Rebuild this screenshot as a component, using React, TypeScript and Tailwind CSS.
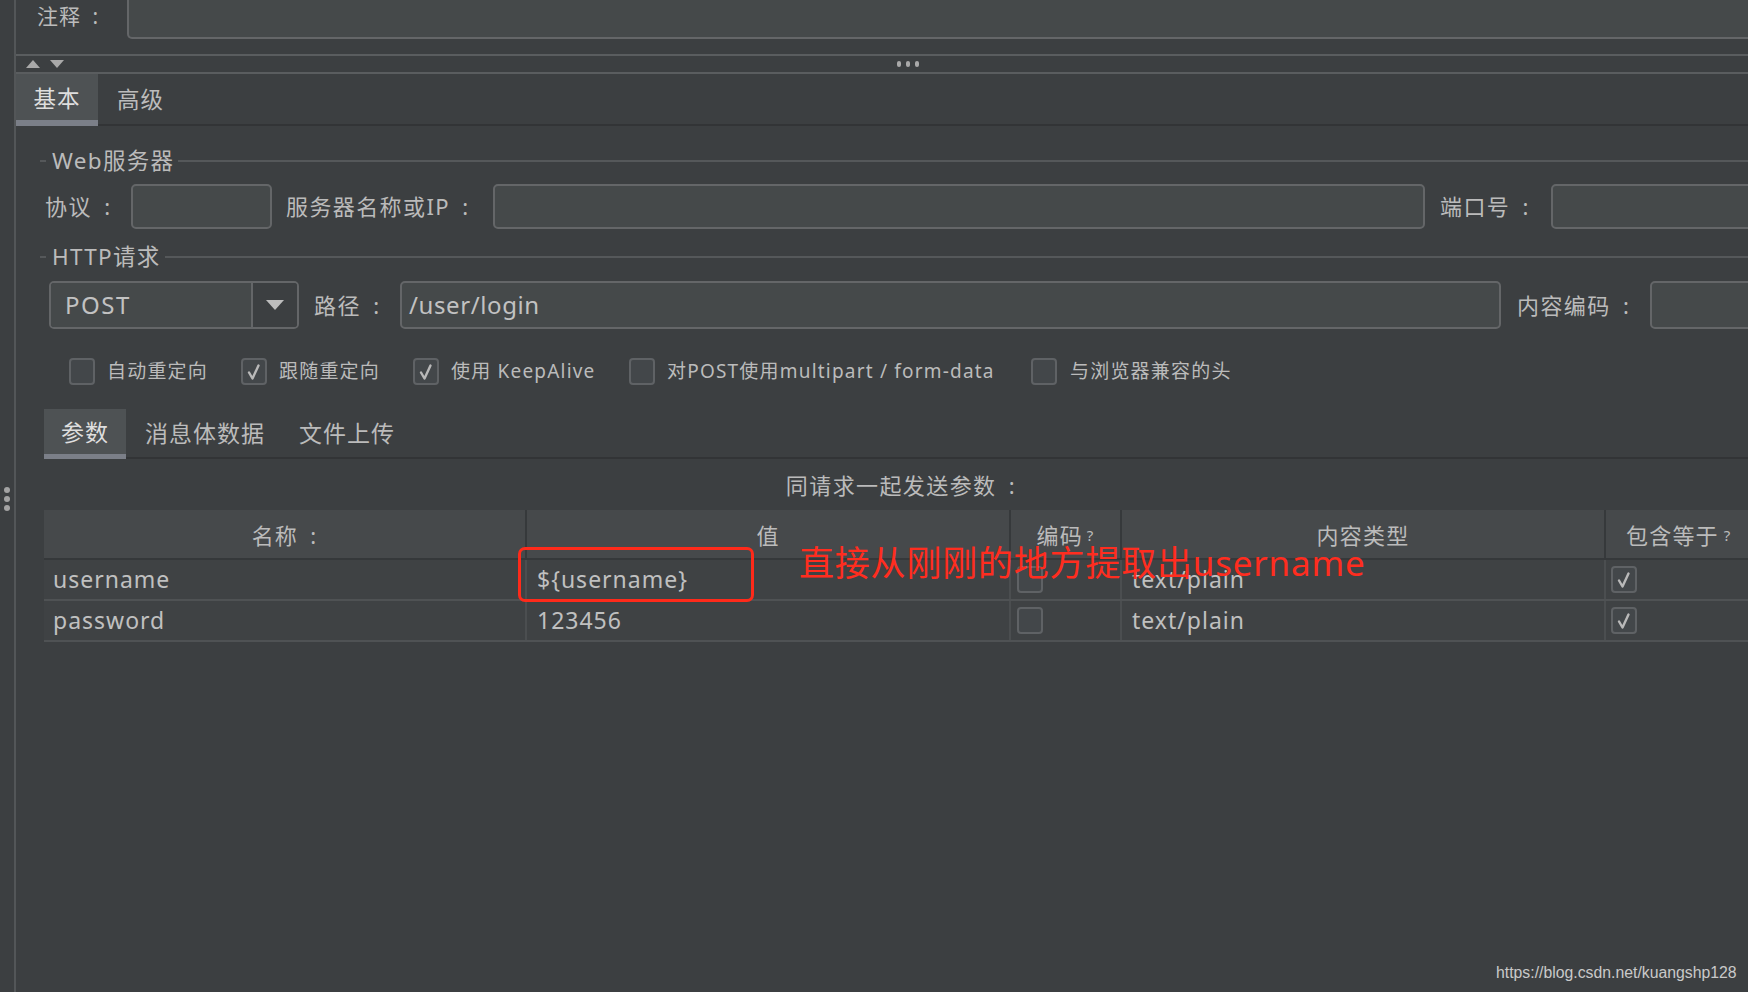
import React from "react";

const Check = () => (
  <svg width="16" height="18" viewBox="0 0 16 18" className="block">
    <path d="M3 9.5 L6.5 15.5 L12.5 2.5" fill="none" stroke="#b9b9b9" strokeWidth="2.4" strokeLinecap="round" strokeLinejoin="round" />
  </svg>
);

const Box = ({ checked }: { checked?: boolean }) => (
  <div className="w-[26px] h-[27px] shrink-0 rounded-[4px] border-2 border-[#5f6265] bg-[#43474a] flex items-center justify-center">
    {checked ? <Check /> : null}
  </div>
);

const Field = ({ w, children, cls }: { w: string; children?: React.ReactNode; cls?: string }) => (
  <div className={`${w} h-full shrink-0 rounded-[5px] border-2 border-[#646668] bg-[#45494a] flex items-center ${cls ?? ""}`}>{children}</div>
);

const Legend = ({ title }: { title: string }) => (
  <div className="flex items-center h-[20px]">
    <div className="ml-[24px] w-[6px] h-[2px] bg-[#55585a]" />
    <div className="ml-[6px] text-[22.5px] leading-none text-[#bbbbbb] tracking-[1.3px]">{title}</div>
    <div className="ml-[4px] flex-1 h-[2px] bg-[#55585a]" />
  </div>
);

const C = "\u2002:";

export default function App() {
  return (
    <div className="w-[1748px] h-[992px] bg-[#3c3f41] overflow-hidden relative flex font-['Noto_Sans','Noto_Sans_CJK_SC',sans-serif]">
      {/* left strip */}
      <div className="w-[14px] shrink-0 flex flex-col items-center pt-[487px] gap-[3px]">
        <div className="w-[6px] h-[6px] rounded-full bg-[#a3a3a3]" />
        <div className="w-[6px] h-[6px] rounded-full bg-[#a3a3a3]" />
        <div className="w-[6px] h-[6px] rounded-full bg-[#a3a3a3]" />
      </div>
      <div className="w-[2px] shrink-0 bg-[#535658]" />

      {/* content */}
      <div className="flex-1 min-w-0 flex flex-col">
        {/* comment row */}
        <div className="h-[54px] flex items-start shrink-0">
          <div className="pl-[21px] h-[34px] flex items-center text-[21px] text-[#bbbbbb] tracking-[1px] w-[111px] shrink-0">注释{C}</div>
          <div className="flex-1 h-[39px] rounded-b-[5px] border-2 border-t-0 border-[#646668] bg-[#45494a] min-w-[1700px]" />
        </div>
        <div className="h-[2px] bg-[#5a5d5f] shrink-0" />
        {/* arrows strip */}
        <div className="h-[16px] flex items-center shrink-0">
          <svg width="14" height="8" viewBox="0 0 14 8" className="ml-[10px]"><path d="M0 8 L7 0 L14 8 Z" fill="#a9a9a9" /></svg>
          <svg width="14" height="8" viewBox="0 0 14 8" className="ml-[10px]"><path d="M0 0 L14 0 L7 8 Z" fill="#a9a9a9" /></svg>
          <div className="ml-[833px] flex gap-[5px] items-center">
            <div className="w-[4px] h-[6px] rounded-full bg-[#a9a9a9]" />
            <div className="w-[4px] h-[6px] rounded-full bg-[#a9a9a9]" />
            <div className="w-[4px] h-[6px] rounded-full bg-[#a9a9a9]" />
          </div>
        </div>
        <div className="h-[2px] bg-[#5a5d5f] shrink-0" />
        {/* tab bar */}
        <div className="flex h-[52px] shrink-0">
          <div className="w-[82px] flex flex-col">
            <div className="h-[46px] bg-[#4e5254] flex items-center justify-center text-[22.5px] tracking-[1px] text-[#dedede] pt-[4px]">基本</div>
            <div className="h-[6px] bg-[#7b7f88]" />
          </div>
          <div className="flex-1 flex flex-col">
            <div className="h-[50px] flex items-center pl-[19px] pt-[2px] text-[22.5px] tracking-[1px] text-[#bbbbbb]">高级</div>
            <div className="h-[2px] bg-[#323436]" />
          </div>
        </div>

        {/* Web server */}
        <div className="mt-[25px] shrink-0"><Legend title="Web服务器" /></div>
        <div className="mt-[13px] h-[45px] flex items-center pl-[29px] shrink-0 text-[22px] tracking-[1.4px] text-[#bbbbbb]">
          <div className="w-[86px] shrink-0">协议{C}</div>
          <Field w="w-[141px]" />
          <div className="w-[221px] pl-[14px] shrink-0 whitespace-nowrap">服务器名称或IP{C}</div>
          <Field w="w-[932px]" />
          <div className="w-[126px] pl-[15px] shrink-0 whitespace-nowrap">端口号{C}</div>
          <Field w="w-[300px]" />
        </div>

        {/* HTTP request */}
        <div className="mt-[18px] shrink-0"><Legend title="HTTP请求" /></div>
        <div className="mt-[14px] h-[48px] flex items-center pl-[33px] shrink-0 text-[22px] tracking-[1.4px] text-[#bbbbbb]">
          <div className="w-[250px] h-full shrink-0 rounded-[5px] border-2 border-[#646668] flex overflow-hidden">
            <div className="w-[202px] bg-[#45494a] border-r-2 border-[#646668] flex items-center pl-[14px] text-[24px] tracking-[1.5px] text-[#c2c2c2]">POST</div>
            <div className="flex-1 bg-[#3c3f41] flex items-center justify-center">
              <svg width="18" height="10" viewBox="0 0 18 10"><path d="M0 0 L18 0 L9 10 Z" fill="#bdbdbd" /></svg>
            </div>
          </div>
          <div className="w-[101px] pl-[15px] shrink-0 whitespace-nowrap">路径{C}</div>
          <Field w="w-[1101px]" cls="pl-[7px] text-[24px] tracking-[0.6px] text-[#c2c2c2]">/user/login</Field>
          <div className="w-[149px] pl-[16px] shrink-0 whitespace-nowrap">内容编码{C}</div>
          <Field w="w-[300px]" />
        </div>

        {/* checkboxes */}
        <div className="mt-[29px] h-[27px] flex items-center pl-[53px] shrink-0 text-[19px] text-[#bbbbbb] tracking-[1.2px] whitespace-nowrap">
          <div className="w-[172px] flex items-center gap-[12px] shrink-0"><Box /><span>自动重定向</span></div>
          <div className="w-[172px] flex items-center gap-[12px] shrink-0"><Box checked /><span>跟随重定向</span></div>
          <div className="w-[216px] flex items-center gap-[12px] shrink-0"><Box checked /><span>使用 KeepAlive</span></div>
          <div className="w-[402px] flex items-center gap-[12px] shrink-0"><Box /><span>对POST使用multipart / form-data</span></div>
          <div className="flex items-center gap-[13px] shrink-0"><Box /><span>与浏览器兼容的头</span></div>
        </div>

        {/* sub tabs */}
        <div className="mt-[24px] h-[50px] flex pl-[28px] shrink-0">
          <div className="w-[82px] flex flex-col shrink-0">
            <div className="h-[45px] bg-[#4e5254] flex items-center justify-center text-[23px] tracking-[1px] text-[#dedede] pt-[2px]">参数</div>
            <div className="h-[5px] bg-[#7b7f88]" />
          </div>
          <div className="flex-1 flex flex-col">
            <div className="h-[48px] flex items-center text-[23px] tracking-[1px] text-[#bbbbbb] pt-[1px]">
              <span className="ml-[19px]">消息体数据</span>
              <span className="ml-[34px]">文件上传</span>
            </div>
            <div className="h-[2px] bg-[#323436]" />
          </div>
        </div>

        {/* params */}
        <div className="ml-[28px] w-[1714px] shrink-0">
          <div className="mt-[13px] h-[26px] flex items-center justify-center text-[22px] text-[#bbbbbb] tracking-[1.4px]">同请求一起发送参数{C}</div>
          <div className="mt-[12px]">
            <div className="h-[50px] flex bg-[#46494b] border-b-2 border-[#35383a] text-[22px] tracking-[1.2px] text-[#bbbbbb]">
              <div className="w-[483px] shrink-0 border-r-2 border-[#36393b] flex items-center justify-center pt-[2px]">名称{C}</div>
              <div className="w-[484px] shrink-0 border-r-2 border-[#36393b] flex items-center justify-center pt-[2px]">值</div>
              <div className="w-[111px] shrink-0 border-r-2 border-[#36393b] flex items-center justify-center pt-[2px]">编码<span className="text-[15px] ml-[4px]">?</span></div>
              <div className="w-[484px] shrink-0 border-r-2 border-[#36393b] flex items-center justify-center pt-[2px]">内容类型</div>
              <div className="flex-1 flex items-center pl-[20px] pt-[2px]">包含等于<span className="text-[15px] ml-[5px]">?</span></div>
            </div>
            {[
              ["username", "${username}"],
              ["password", "123456"],
            ].map(([n, v]) => (
              <div key={n} className="h-[41px] flex bg-[#3f4244] border-b-2 border-[#4f5254] text-[23px] text-[#c0c0c0] tracking-[1px]">
                <div className="w-[483px] shrink-0 border-r-2 border-[#4b4e50] flex items-center pl-[9px]">{n}</div>
                <div className="w-[484px] shrink-0 border-r-2 border-[#4b4e50] flex items-center pl-[10px]">{v}</div>
                <div className="w-[111px] shrink-0 border-r-2 border-[#4b4e50] flex items-center pl-[6px]"><Box /></div>
                <div className="w-[484px] shrink-0 border-r-2 border-[#4b4e50] flex items-center pl-[10px]">text/plain</div>
                <div className="flex-1 flex items-center pl-[5px]"><Box checked /></div>
              </div>
            ))}
          </div>
        </div>
      </div>

      {/* annotation overlay */}
      <div className="absolute left-[518px] top-[547px] w-[236px] h-[55px] border-[3px] border-[#ff2a1a] rounded-[7px]" />
      <div className="absolute left-[799px] top-[541px] text-[35px] leading-[44px] tracking-[0.8px] text-[#ff2d1f] whitespace-nowrap">直接从刚刚的地方提取出username</div>

      {/* watermark */}
      <div className="absolute left-[1496px] top-[963px] text-[15.8px] leading-[20px] text-[#c9c9c9] font-['Liberation_Sans',sans-serif] whitespace-nowrap">https://blog.csdn.net/kuangshp128</div>
    </div>
  );
}
